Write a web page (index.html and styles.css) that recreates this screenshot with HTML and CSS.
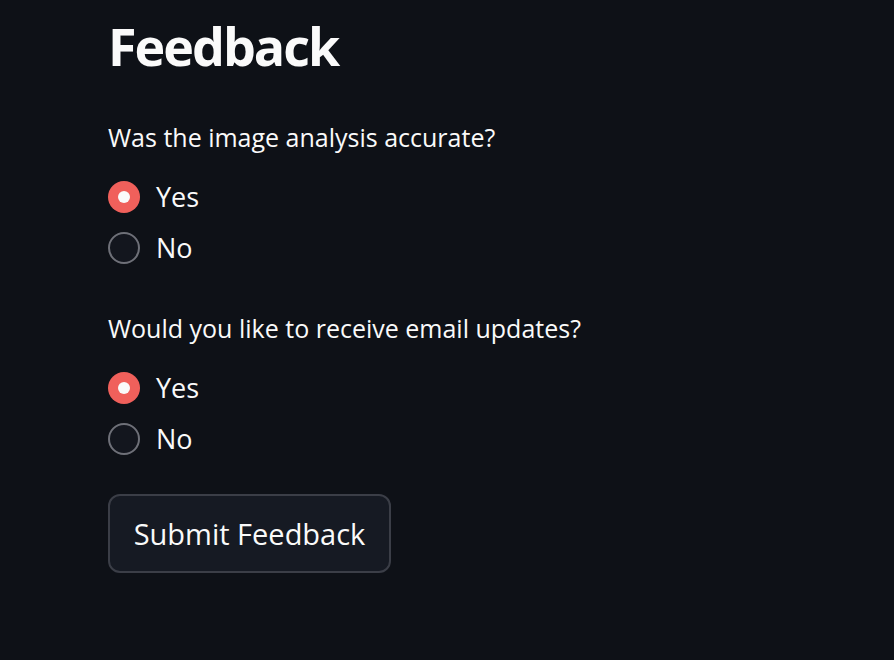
FILE: index.html
```html
<!DOCTYPE html>
<html>
<head>
<meta charset="utf-8">
<link rel="stylesheet" href="styles.css">
</head>
<body>
<main class="main">
  <h1 class="title">Feedback</h1>
  <section class="group">
    <p class="label">Was the image analysis accurate?</p>
    <div class="options">
      <label class="option"><span class="radio checked"></span><span class="opt-text">Yes</span></label>
      <label class="option"><span class="radio"></span><span class="opt-text">No</span></label>
    </div>
  </section>
  <section class="group">
    <p class="label">Would you like to receive email updates?</p>
    <div class="options">
      <label class="option"><span class="radio checked"></span><span class="opt-text">Yes</span></label>
      <label class="option"><span class="radio"></span><span class="opt-text">No</span></label>
    </div>
  </section>
  <button class="btn">Submit Feedback</button>
</main>
</body>
</html>
```
FILE: styles.css
```css
html, body {
  margin: 0;
  padding: 0;
  background: #0e1117;
  color: #fafafa;
  font-family: "Open Sans", "Noto Sans", sans-serif;
}
.main {
  padding: 16px 0 0 108px;
  display: flex;
  flex-direction: column;
  align-items: flex-start;
}
.title {
  margin: 0 0 6px;
  font-size: 52px;
  font-weight: 700;
  line-height: 60px;
  letter-spacing: -2px;
}
.group {
  display: flex;
  flex-direction: column;
  margin-top: 37px;
}
.label {
  margin: 0 0 16px;
  font-size: 25px;
  line-height: 36px;
}
.options {
  display: flex;
  flex-direction: column;
}
.option {
  display: flex;
  align-items: center;
  height: 51px;
  gap: 16px;
}
.radio {
  width: 32px;
  height: 32px;
  box-sizing: border-box;
  border-radius: 50%;
  border: 2px solid #6e7078;
  background: #13161e;
  display: flex;
  align-items: center;
  justify-content: center;
}
.radio.checked {
  border: none;
  background: #f0605b;
}
.radio.checked::after {
  content: "";
  width: 12px;
  height: 12px;
  border-radius: 50%;
  background: #fafafa;
}
.opt-text {
  font-size: 27px;
}
.btn {
  margin-top: 30px;
  width: 283px;
  height: 79px;
  border: 2px solid #3b3e47;
  border-radius: 12px;
  background: #161a23;
  color: #fafafa;
  font-family: inherit;
  font-size: 29px;
  padding: 0;
}
```
